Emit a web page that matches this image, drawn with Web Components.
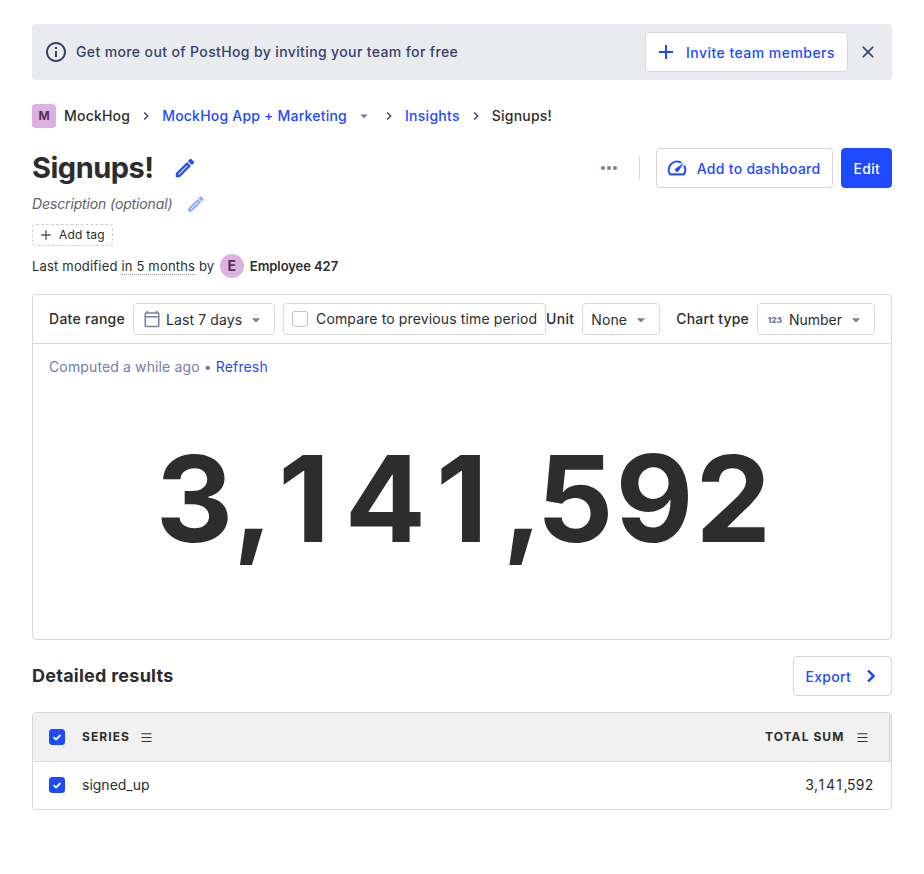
<!DOCTYPE html>
<html lang="en">
<head>
<meta charset="utf-8">
<title>Signups! • PostHog</title>
<style>
html, body { margin: 0; background: #fff; }
body { font: 400 14px/20px Inter, sans-serif; color: #2d2d2d; }
</style>
</head>
<body>
<insight-page></insight-page>
<script>
const ICONS = {
  info: '<path d="M11 7h2v2h-2zm0 4h2v6h-2zm1-9C6.480 2 2 6.480 2 12s4.480 10 10 10 10-4.480 10-10S17.520 2 12 2zm0 18c-4.410 0-8-3.590-8-8s3.590-8 8-8 8 3.590 8 8-3.590 8-8 8z"/>',
  plus: '<path d="M19 13h-6v6h-2v-6H5v-2h6V5h2v6h6z"/>',
  close: '<path d="M19 6.410 17.590 5 12 10.590 6.410 5 5 6.410 10.590 12 5 17.590 6.410 19 12 13.410 17.590 19 19 17.590 13.410 12z"/>',
  chevron: '<path d="M10 6 8.590 7.410 13.170 12l-4.580 4.590L10 18l6-6z"/>',
  bold: '<path stroke="currentColor" stroke-width=".7" d="M10 6 8.590 7.410 13.170 12l-4.580 4.590L10 18l6-6z"/>',
  caret: '<path d="m7 10 5 5 5-5z"/>',
  edit: '<path stroke="currentColor" stroke-width=".4" d="m14.060 9.020.92.92L5.920 19H5v-.92l9.060-9.060M17.660 3c-.25 0-.51.1-.7.29l-1.830 1.830 3.750 3.750 1.830-1.830c.39-.39.39-1.020 0-1.410l-2.340-2.340c-.2-.2-.45-.29-.71-.29zm-3.600 3.190L3 17.250V21h3.750L17.810 9.940l-3.750-3.750z"/>',
  gauge: '<path stroke="currentColor" stroke-width=".3" d="m20.380 8.570-1.230 1.850a8 8 0 0 1-.22 7.580H5.070A8 8 0 0 1 15.580 6.850l1.850-1.230A10 10 0 0 0 3.350 19a2 2 0 0 0 1.720 1h13.850a2 2 0 0 0 1.740-1 10 10 0 0 0-.27-10.440zm-9.790 6.840a2 2 0 0 0 2.830 0l5.660-8.490-8.490 5.660a2 2 0 0 0 0 2.830z"/>',
  calendar: '<path d="M20 3h-1V1h-2v2H7V1H5v2H4c-1.100 0-2 .9-2 2v16c0 1.100.9 2 2 2h16c1.100 0 2-.9 2-2V5c0-1.100-.9-2-2-2zm0 18H4V10h16v11zm0-13H4V5h16v3z"/>',
  dots: '<circle cx="6" cy="12" r="2"/><circle cx="12" cy="12" r="2"/><circle cx="18" cy="12" r="2"/>',
  menu: '<path d="M4 5h16v1.600H4zM4 11.200h16v1.600H4zM4 17.400h16V19H4z"/>'
};
const define = (name, html, setup) => {
  const tpl = document.createElement('template');
  tpl.innerHTML = html;
  customElements.define(name, class extends HTMLElement {
    constructor() {
      super();
      this.attachShadow({ mode: 'open' }).append(tpl.content.cloneNode(true));
    }
    connectedCallback() { if (setup) setup(this, this.shadowRoot); }
  });
};

define('ui-icon', '<style>:host{display:block;flex:none;width:24px;height:24px}svg{display:block;width:100%;height:100%;fill:currentColor}</style><svg viewBox="0 0 24 24"></svg>',
  (el, root) => {
    root.querySelector('svg').innerHTML = ICONS[el.getAttribute('name')];
    const s = el.getAttribute('size');
    if (s) { el.style.width = el.style.height = s + 'px'; }
  });

define('ui-button', `<style>
:host{display:flex;flex:none;box-sizing:border-box;height:40px;padding:1px 12px 0;align-items:center;border:1px solid #d9d9d9;border-radius:4px;background:#fff;color:#1d4aff;font-weight:500;letter-spacing:.28px;white-space:nowrap}
:host([primary]){background:#1d4aff;border-color:#1d4aff;color:#fff}
:host([select]){height:32px;padding:1px 8px 0;color:#2d2d2d;font-weight:400}
</style><slot></slot>`);

define('ui-avatar', `<style>
:host{display:flex;flex:none;width:24px;height:24px;align-items:center;justify-content:center;border-radius:4px;background:#dcb1e3;color:#572e5e;font-weight:700;font-size:12px}
:host([round]){border-radius:50%;font-size:14px}
</style><slot></slot>`);

define('ui-checkbox', `<style>
:host{display:block;flex:none;box-sizing:border-box;width:16px;height:16px;border:1px solid #c4c4c4;border-radius:3px;background:#fff}
svg{display:none}
:host([checked]){background:#1d4aff;border-color:#1d4aff}
:host([checked]) svg{display:block;width:14px;height:14px}
</style><svg viewBox="0 0 14 14"><path d="M3.500 7.200 6 9.500l4.500-4.500" fill="none" stroke="#fff" stroke-width="1.800"/></svg>`);

/* Near-even figure spacing that keeps the footless "1". */
define('even-number', `<style>
:host{display:block;white-space:nowrap}
.n{font-kerning:none;letter-spacing:.018em}
.pre{letter-spacing:.083em}
.precomma{letter-spacing:.042em}
.one{letter-spacing:.124em}
.comma{letter-spacing:-.05em}
.lead{letter-spacing:0}
</style><span class="n"></span>`,
  (el, root) => {
    const v = el.getAttribute('value');
    root.querySelector('.n').innerHTML = [...v].map((c, i) => {
      const next = v[i + 1];
      const kind = c === '1' ? 'one'
        : next === '1' ? (c === ',' ? 'precomma' : 'pre')
        : c === ',' ? 'comma' : next === ',' ? 'lead' : '';
      return kind ? `<span class="${kind}">${c}</span>` : c;
    }).join('');
  });

define('invite-banner', `<style>
:host{display:flex;align-items:center;height:56px;box-sizing:border-box;padding:0 12px;border-radius:4px;background:#eaebef;color:#35416b;font-weight:500}
.t{margin-left:8px;flex:1;letter-spacing:.375px}
ui-button{letter-spacing:.46px}
ui-button ui-icon{margin:-1px 8px 0 -4px}
</style>
<ui-icon name="info"></ui-icon><span class="t">Get more out of PostHog by inviting your team for free</span>
<ui-button><ui-icon name="plus"></ui-icon>Invite team members</ui-button>
<ui-icon name="close" size="20" style="margin:0 2px 0 10px"></ui-icon>`);

define('bread-crumbs', `<style>
:host{display:flex;align-items:center;height:24px;margin-top:24px;font-weight:500;letter-spacing:.21px}
a{color:#1d4aff}
.sep{color:#35416b;margin:0 8px}
</style>
<ui-avatar style="margin-right:8px;letter-spacing:0">M</ui-avatar><span>MockHog</span>
<ui-icon class="sep" name="chevron" size="16"></ui-icon><a>MockHog App + Marketing</a>
<ui-icon name="caret" size="18" style="color:#747ea1;margin-left:8px"></ui-icon>
<ui-icon class="sep" name="chevron" size="16"></ui-icon><a style="letter-spacing:.28px">Insights</a>
<ui-icon class="sep" name="chevron" size="16"></ui-icon><span>Signups!</span>`);

define('insight-header', `<style>
:host{display:block;margin-top:20px}
.row{display:flex;align-items:center}
h1{margin:0;font:700 29px/40px Inter,sans-serif;letter-spacing:-.5px}
.desc{height:24px;margin-top:4px}
.desc i{color:#5f5f5f;letter-spacing:-.13px}
.tag{display:inline-flex;box-sizing:border-box;align-items:center;height:22px;margin-top:8px;padding:0 7px 0 5px;border:1px dashed #d0d0d0;border-radius:4px;font-size:12px;letter-spacing:.2px}
.mod{height:24px;margin-top:8px;font-size:13px;letter-spacing:.18px;white-space:pre}
u{text-decoration:none;border-bottom:1px dotted #999;line-height:16px}
b{font-weight:600;letter-spacing:-.07px}
.div{width:1px;height:24px;background:#d9d9d9;margin:0 16px 0 18px}
</style>
<div class="row"><h1>Signups!</h1><ui-icon name="edit" style="color:#1d4aff;margin-left:19px"></ui-icon>
<span style="flex:1"></span><ui-icon name="dots" style="color:#747ea1"></ui-icon><span class="div"></span>
<ui-button><ui-icon name="gauge" size="22" style="margin:-1px 9px 0 -3px"></ui-icon>Add to dashboard</ui-button>
<ui-button primary style="margin-left:8px;padding:1px 11px 0">Edit</ui-button></div>
<div class="row desc"><i>Description (optional)</i><ui-icon name="edit" size="20" style="color:#8ea4ff;margin-left:14px"></ui-icon></div>
<div style="display:flex"><span class="tag"><ui-icon name="plus" size="16" style="margin-right:5px;color:#555"></ui-icon>Add tag</span></div>
<div class="row mod"><span>Last modified </span><u>in 5 months</u><span> by </span><ui-avatar round style="margin:0 6px 0 1.700px">E</ui-avatar><b>Employee 427</b></div>`);

define('insight-card', `<style>
:host{display:block;box-sizing:border-box;height:346px;margin-top:16px;border:1px solid #d9d9d9;border-radius:4px}
.bar{display:flex;align-items:center;box-sizing:border-box;height:49px;padding:0 16px;border-bottom:1px solid #d9d9d9;white-space:nowrap}
.l{font-weight:500;letter-spacing:.28px}
ui-button{letter-spacing:.1px}
.c{color:#747ea1;margin-left:4px}
.meta{padding:13px 16px 0;color:#747ea1;letter-spacing:.13px}
.meta a{color:#1d4aff}
.n{font:700 120px/140px Inter,sans-serif;text-align:center;margin-top:52px;padding-left:5px}
.num{width:22px;text-align:center;font-size:8px;font-weight:900;color:#747ea1;letter-spacing:.1px;margin-right:5px}
</style>
<div class="bar"><span class="l">Date range</span>
<ui-button select style="margin-left:8px;width:142px"><ui-icon name="calendar" size="18" style="color:#747ea1;margin:-2px 5px 0 1px"></ui-icon>Last 7 days<ui-icon class="c" name="caret" size="20"></ui-icon></ui-button>
<ui-button select style="margin-left:8px;width:263px;padding-top:0;letter-spacing:.13px"><ui-checkbox style="margin-right:8px"></ui-checkbox>Compare to previous time period</ui-button>
<span class="l">Unit</span>
<ui-button select style="margin-left:8px;width:78px">None<ui-icon class="c" name="caret" size="20"></ui-icon></ui-button>
<span class="l" style="margin-left:16px;letter-spacing:.2px">Chart type</span>
<ui-button select style="margin-left:8px;width:118px;letter-spacing:0"><span class="num">123</span>Number<ui-icon class="c" name="caret" size="20"></ui-icon></ui-button></div>
<div class="meta">Computed a while ago • <a>Refresh</a></div>
<even-number class="n" value="3,141,592"></even-number>`);

define('results-table', `<style>
:host{display:block;margin-top:16px}
.top{display:flex;align-items:center;justify-content:space-between;height:40px}
h2{margin:0;font:700 18px/24px Inter,sans-serif;letter-spacing:.25px}
.table{box-sizing:border-box;height:98px;margin-top:16px;border:1px solid #d9d9d9;border-radius:4px;overflow:hidden}
.r{display:flex;align-items:center;height:46px;padding:0 17.500px 0 16px}
.h{height:48px;padding-right:21px;background:#f1f1f1;border-bottom:1px solid #d9d9d9;font-size:12px;font-weight:700;letter-spacing:1.080px;box-shadow:inset -1px 0 #f1f1f1,inset -2px 0 #d0d0d0}
.k{flex:1;margin-left:17px;display:flex;align-items:center}
.m{margin-left:9px}
.t{margin-left:10.500px}
</style>
<div class="top"><h2>Detailed results</h2><ui-button>Export<ui-icon name="bold" style="margin:-1px -4px 0 8px"></ui-icon></ui-button></div>
<div class="table"><div class="r h"><ui-checkbox checked></ui-checkbox><span class="k">SERIES<ui-icon class="m" name="menu" size="15"></ui-icon></span><span>TOTAL SUM</span><ui-icon class="t" name="menu" size="15"></ui-icon></div>
<div class="r"><ui-checkbox checked></ui-checkbox><span class="k">signed_up</span><even-number value="3,141,592"></even-number></div></div>`);

define('insight-page', `<style>:host{display:block;padding:24px 32px}</style>
<invite-banner></invite-banner><bread-crumbs></bread-crumbs><insight-header></insight-header><insight-card></insight-card><results-table></results-table>`);
</script>
</body>
</html>
